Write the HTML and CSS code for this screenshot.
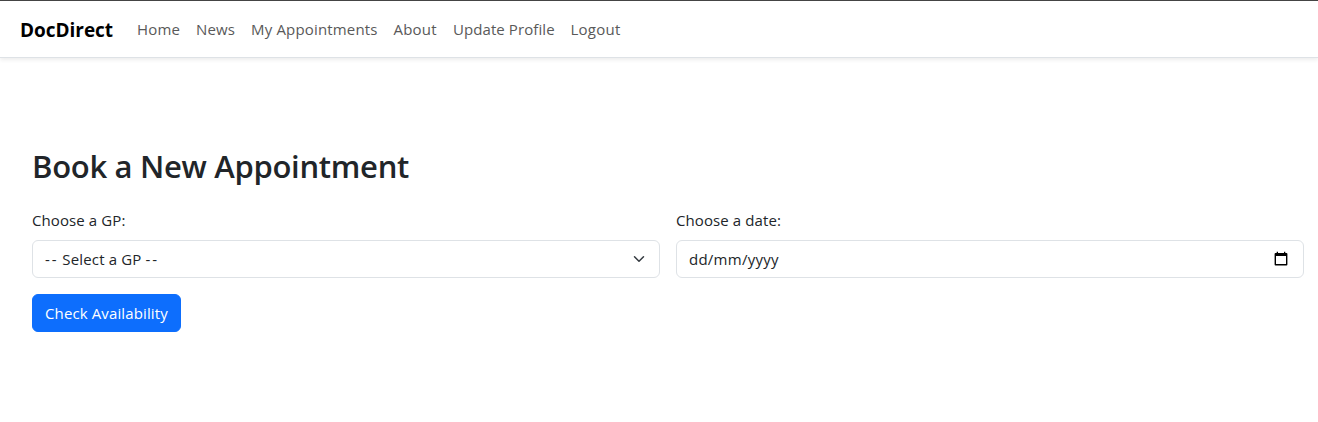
FILE: index.html
```html
<!DOCTYPE html>
<html lang="en">
<head>
<meta charset="utf-8">
<title>DocDirect</title>
<link rel="stylesheet" href="styles.css">
</head>
<body>
<header class="navbar">
  <a class="brand">DocDirect</a>
  <nav class="links">
    <a class="home">Home</a>
    <a class="news">News</a>
    <a class="appointments">My Appointments</a>
    <a class="about">About</a>
    <a class="profile">Update Profile</a>
    <a class="logout">Logout</a>
  </nav>
</header>
<main class="content">
  <h2 class="title">Book a New Appointment</h2>
  <form class="form">
    <div class="field">
      <label class="label">Choose a GP:</label>
      <div class="control">
        <span class="select-value"><span class="dashes">--</span> Select a GP <span class="dashes">--</span></span>
        <svg class="chevron" width="16" height="12" viewBox="0 0 16 16"><path d="m2 5 6 6 6-6" fill="none" stroke="#343a40" stroke-width="2" stroke-linecap="round" stroke-linejoin="round"/></svg>
      </div>
    </div>
    <div class="field">
      <label class="label">Choose a date:</label>
      <div class="control">
        <span class="date-value">dd/mm/yyyy</span>
        <svg class="calendar" width="16" height="16" viewBox="0 0 16 16"><path d="M3.700.700h1.300V2h6V.700h1.300V2h1.200q.9 0 .9.900v10.600q0 .9-.9.900h-11q-.9 0-.9-.9V2.900q0-.9.9-.9h1.200zM3 5v8h10V5z"/></svg>
      </div>
    </div>
    <button class="button" type="button">Check Availability</button>
  </form>
</main>
</body>
</html>
```
FILE: styles.css
```css
* { box-sizing: border-box; }

body {
  margin: 0;
  background: #fff;
  color: #212529;
  font: 15px/24px "Segoe UI", "Open Sans", "Noto Sans", sans-serif;
}

.navbar {
  display: flex;
  align-items: center;
  height: 58px;
  padding-left: 20px;
  border-top: 1px solid #444;
  border-bottom: 1px solid #dee2e6;
  box-shadow: 0 2px 4px rgba(0, 0, 0, .075);
}

.brand {
  width: 117px;
  padding-top: 1px;
  color: #000;
  font-size: 19px;
  font-weight: 700;
  letter-spacing: -.03px;
}

.links { display: flex; color: #595959; white-space: nowrap; }
.home { width: 59px; letter-spacing: .2px; }
.news { width: 55px; letter-spacing: .15px; }
.appointments { width: 142.500px; letter-spacing: .17px; }
.about { width: 59.500px; letter-spacing: .2px; }
.profile { width: 117.500px; letter-spacing: .08px; }
.logout { letter-spacing: .25px; }

.content { padding: 89px 14px 0 32px; }

.title {
  margin: 0 0 23px;
  font-size: 31px;
  line-height: 38px;
  font-weight: 600;
  letter-spacing: -.3px;
  white-space: nowrap;
}

.form {
  display: grid;
  grid-template-columns: 1fr 1fr;
  gap: 16px;
}

.label { display: block; margin-bottom: 8px; letter-spacing: .1px; }

.control {
  display: flex;
  align-items: center;
  justify-content: space-between;
  height: 38px;
  padding: 0 12px;
  border: 1px solid #dee2e6;
  border-radius: 6px;
}

.select-value { letter-spacing: .16px; }
.dashes { letter-spacing: 1.800px; }
.date-value { letter-spacing: .25px; }

.calendar { margin-right: 2px; }

.button {
  width: 149px;
  height: 38px;
  padding: 0 12px;
  border: 1px solid #0d6efd;
  border-radius: 6px;
  background: #0d6efd;
  color: #fff;
  font: inherit;
  letter-spacing: .12px;
  text-align: left;
  white-space: nowrap;
}
```
